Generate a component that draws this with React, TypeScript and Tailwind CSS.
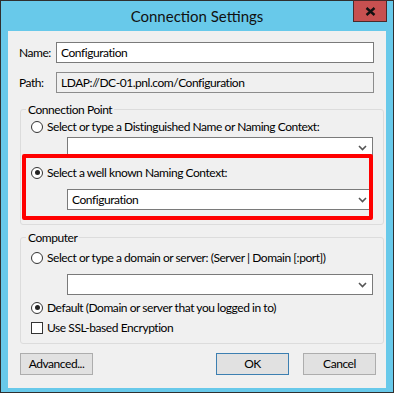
import React from 'react';

const font = { fontFamily: 'Lato, "Liberation Sans", Arial, sans-serif' };

function Radio({ checked }: { checked?: boolean }) {
  return (
    <span className="w-[12px] h-[12px] rounded-full border border-[#333333] bg-white flex items-center justify-center shrink-0">
      {checked && <span className="w-[5px] h-[5px] rounded-full bg-[#222222]" />}
    </span>
  );
}

function Combo({ value }: { value?: string }) {
  return (
    <div className="ml-[36px] w-[306px] h-[21px] border border-[#7a7a7a] bg-white flex items-center pl-[4px] pr-[5px]">
      <span className="flex-1 text-[12px] text-black leading-none">{value}</span>
      <svg width="9" height="6" viewBox="0 0 9 6">
        <path d="M1 1 L4.5 4.5 L8 1" fill="none" stroke="#555555" strokeWidth="1.6" />
      </svg>
    </div>
  );
}

function Btn({ label, primary }: { label: string; primary?: boolean }) {
  return (
    <button
      className={`w-[73px] h-[22px] bg-[#e1e1e1] border text-[12px] text-black leading-none ${primary ? 'border-[#3c7fb1]' : 'border-[#adadad]'}`}
    >
      {label}
    </button>
  );
}

export default function App() {
  return (
    <div className="w-[394px] h-[393px] bg-[#2f2f2f] p-px" style={font}>
      <div className="relative w-full h-full bg-[#68c9ea] flex flex-col">
        {/* title bar */}
        <div className="h-[30px] flex items-center justify-center text-[15px] text-[#111111] pt-[1px]">
          Connection Settings
        </div>
        <div className="absolute top-[-1px] right-[6px] w-[34px] h-[22px] bg-[#c75050] border border-[#4a2a2a] flex items-center justify-center">
          <svg width="11" height="9" viewBox="0 0 11 9">
            <path d="M1.5 1 L9.5 8 M9.5 1 L1.5 8" stroke="#111111" strokeWidth="2.4" />
          </svg>
        </div>

        {/* client area */}
        <div className="relative mx-[7px] h-[357px] bg-[#f0f0f0] px-[12px] text-[12px] text-black tracking-[-0.45px]">
          <div className="flex items-center mt-[11px] h-[21px]">
            <span className="w-[36px] -ml-px">Name:</span>
            <div className="flex-1 h-[21px] ml-px border border-[#7a7a7a] bg-white flex items-center pl-[4px]">Configuration</div>
          </div>
          <div className="flex items-center mt-[9px] h-[21px]">
            <span className="w-[36px] -ml-px">Path:</span>
            <div className="flex-1 h-[21px] ml-px border border-[#8c8c8c] bg-[#f0f0f0] flex items-center pl-[4px]">LDAP://DC-01.pnl.com/Configuration</div>
          </div>

          <fieldset className="mt-[9px] w-[357px] border border-[#dcdcdc] rounded-[3px] px-[10px] pb-[14px]">
            <legend className="ml-[-5px] px-[2px] leading-[15px]">Connection Point</legend>
            <div className="flex items-center gap-[4px] h-[15px] mt-[2px]">
              <Radio />
              <span>Select or type a Distinguished Name or Naming Context:</span>
            </div>
            <div className="mt-[3px]"><Combo /></div>
            <div className="flex items-center gap-[4px] h-[15px] mt-[7px]">
              <Radio checked />
              <span>Select a well known Naming Context:</span>
            </div>
            <div className="mt-[9px]"><Combo value="Configuration" /></div>
          </fieldset>

          <fieldset className="mt-[5px] w-[357px] border border-[#dcdcdc] rounded-[3px] px-[10px] pb-[8px]">
            <legend className="ml-[-5px] px-[2px] leading-[15px]">Computer</legend>
            <div className="flex items-center gap-[4px] h-[15px] mt-[5px]">
              <Radio />
              <span>Select or type a domain or server: (Server | Domain [:port])</span>
            </div>
            <div className="mt-[9px]"><Combo /></div>
            <div className="flex items-center gap-[4px] h-[15px] mt-[5px]">
              <Radio checked />
              <span>Default (Domain or server that you logged in to)</span>
            </div>
            <div className="flex items-center gap-[4px] h-[15px] mt-[5px]">
              <span className="w-[12px] h-[12px] border border-[#333333] bg-white shrink-0" />
              <span>Use SSL-based Encryption</span>
            </div>
          </fieldset>

          <div className="flex items-center mt-[9px] w-[356px]">
            <Btn label="Advanced..." />
            <div className="flex-1" />
            <Btn label="OK" primary />
            <div className="w-[14px]" />
            <Btn label="Cancel" />
          </div>

          {/* highlight annotation */}
          <div className="absolute left-[14px] top-[123px] w-[351px] h-[66px] border-[4px] border-[#ff0000] rounded-[2px] pointer-events-none" />
        </div>
      </div>
    </div>
  );
}
